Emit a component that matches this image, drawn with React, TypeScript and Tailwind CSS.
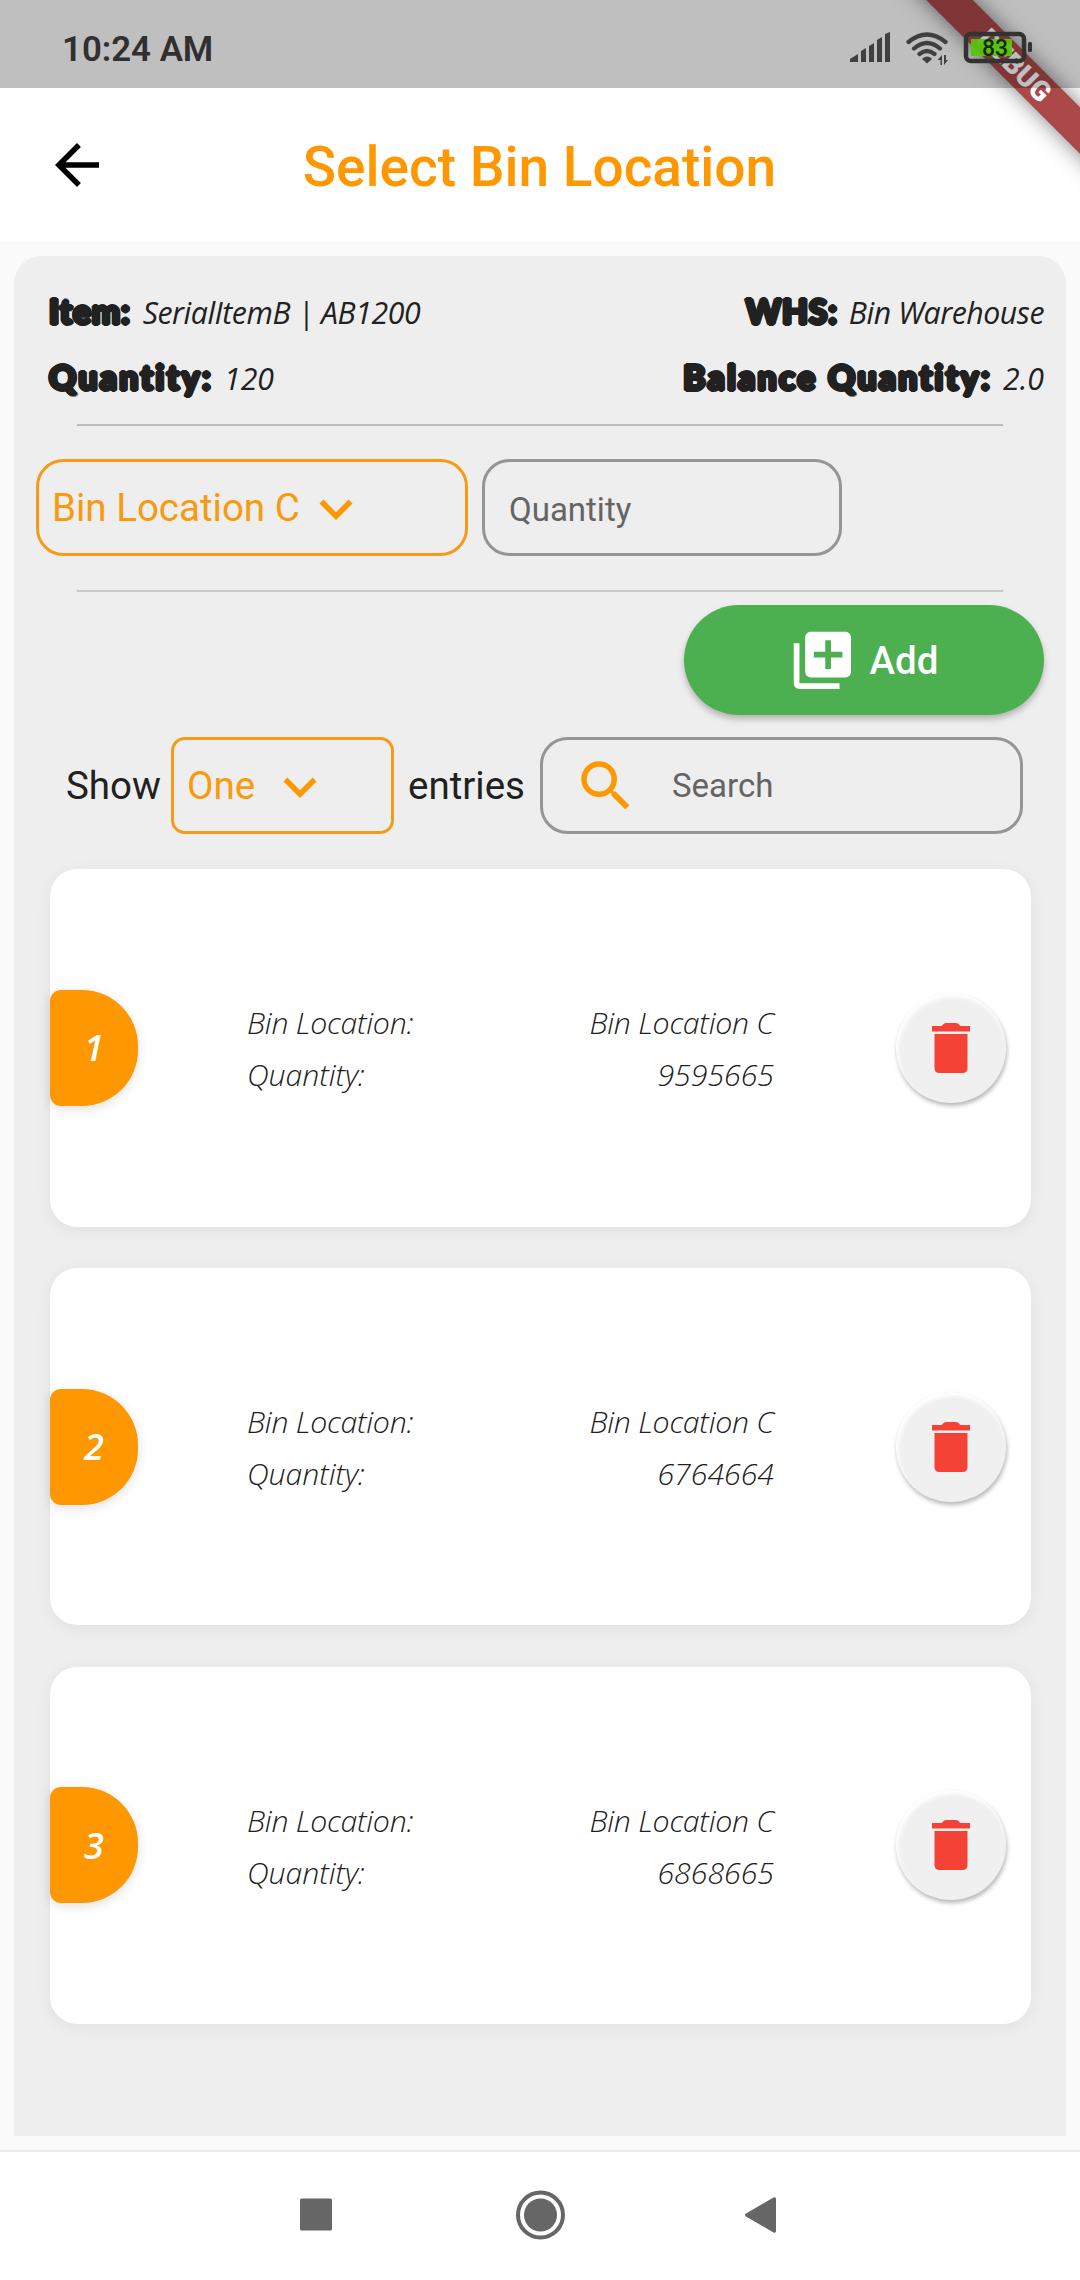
import { MdArrowBack, MdKeyboardArrowDown, MdLibraryAdd, MdSearch } from "react-icons/md";

const entries = [
  { id: 1, bin: "Bin Location C", quantity: "9595665" },
  { id: 2, bin: "Bin Location C", quantity: "6764664" },
  { id: 3, bin: "Bin Location C", quantity: "6868665" },
];

function DebugBanner() {
  return (
    <div className="pointer-events-none absolute top-0 right-0 h-[260px] w-[260px] overflow-hidden">
      <div className="absolute top-[49px] left-[-5px] flex h-[33px] w-[400px] rotate-45 items-center justify-center bg-[#ab4848] shadow-[0_0_22px_rgba(0,0,0,0.5)]">
        <span className="text-[28px] leading-none font-black whitespace-nowrap text-white">DEBUG</span>
      </div>
    </div>
  );
}

function StatusBar() {
  return (
    <div className="relative flex h-[88px] shrink-0 items-center justify-between bg-black/25 pr-[47px] pl-[62px] text-[#303030]">
      <span className="pt-[10px] text-[34.8px] leading-none font-semibold whitespace-nowrap">10:24 AM</span>
      <svg className="mt-[9px]" width="184" height="36" viewBox="849 31 184 36" fill="none">
        <g fill="#404040">
          <path d="M850 62v-3l8-5v8zM861 62V51l5-3v14zM869 62V46l5-3v19zM877 62V40l5-3v25zM885 62V34l5-2v30z" />
          <path d="M927 56.500a7 7 0 0 0-5 2.500l5 4.500 5-4.500c-1-1.500-3-2.500-5-2.500z" />
          <path d="M940.500 65v-5h-3l4.500-5v10zM944 55v10l4-5h-2v-5z" />
        </g>
        <g stroke="#404040" strokeWidth="4.200" strokeLinecap="round">
          <path d="M908.500 42q18.500-15 37 0M914 48.500q13-11 26 0M919.500 54q7.500-6 15 0" />
        </g>
        <rect x="971" y="39" width="41" height="17" fill="#58c40e" fillOpacity="0.950" />
        <rect x="966" y="34" width="58" height="27" rx="5" stroke="#333" strokeWidth="4.500" />
        <rect x="1028" y="42" width="4" height="10" rx="1.500" fill="#333" />
        <text x="995" y="55.500" textAnchor="middle" fontSize="23" fontWeight="500" fill="#14280a">83</text>
      </svg>
    </div>
  );
}

function InfoLabel({ children, wide = false }: { children: string; wide?: boolean }) {
  return (
    <span
      className={`font-[Lato,sans-serif] text-[33.5px] leading-[66px] font-black [text-shadow:2px_0_0_#212121,-2px_0_0_#212121,0_1.8px_0_#212121,0_-1.8px_0_#212121,1.4px_1.4px_0_#212121,-1.4px_1.4px_0_#212121,1.4px_-1.4px_0_#212121,-1.4px_-1.4px_0_#212121] ${
        wide ? "tracking-[2.4px]" : "tracking-[0.9px]"
      }`}
    >
      {children}
    </span>
  );
}

function InfoValue({ children, numeric = false }: { children: string; numeric?: boolean }) {
  return (
    <span
      className={`font-['Open_Sans',sans-serif] text-[30.25px] italic ${numeric ? "tracking-normal" : "tracking-[-0.45px]"}`}
    >
      {children}
    </span>
  );
}

function TrashIcon() {
  return (
    <svg width="40" height="52" viewBox="0 0 40 52" fill="#f44336">
      <path d="M1 4h9q1 0 2-1.500T15 1h10q2 0 3 1.500T30 4h9v5.500H1zM3.500 12h33v34q0 5-5 5h-23q-5 0-5-5z" />
    </svg>
  );
}

function EntryCard({ id, bin, quantity }: { id: number; bin: string; quantity: string }) {
  return (
    <div className="flex h-[357.5px] items-center rounded-[27.5px] bg-white pr-[25px] shadow-[0_3px_16px_rgba(0,0,0,0.06)]">
      <div className="flex h-[116px] w-[88px] items-center justify-center rounded-l-[11px] rounded-r-[56px] bg-[#ff9800] pt-[1px] font-['Open_Sans',sans-serif] text-[36px] leading-none font-semibold text-white italic shadow-[0_3px_12px_rgba(0,0,0,0.12)]">
        {id}
      </div>
      <div className="ml-[109px] flex w-[527px] flex-col pt-[3px] font-['Open_Sans',sans-serif] text-[30.25px] leading-[52px] font-light text-[#212121] italic">
        <div className="flex justify-between tracking-[-0.27px]">
          <span>Bin Location:</span>
          <span>{bin}</span>
        </div>
        <div className="flex justify-between">
          <span className="tracking-[-0.1px]">Quantity:</span>
          <span>{quantity}</span>
        </div>
      </div>
      <button className="ml-auto flex h-[110px] w-[110px] items-center justify-center rounded-full bg-[#f0f0f0] pr-[1px] shadow-[1px_3px_4px_rgba(0,0,0,0.28),inset_2px_4px_4px_#fff]">
        <TrashIcon />
      </button>
    </div>
  );
}

export default function App() {
  return (
    <div className="relative flex h-[2280px] w-[1080px] flex-col overflow-hidden bg-[#fafafa] font-[Roboto,sans-serif] text-[#212121]">
      <div className="absolute inset-x-0 top-0 h-[242px] bg-white" />
      <DebugBanner />
      <StatusBar />
      <header className="relative flex h-[154px] shrink-0 items-center justify-center">
        <MdArrowBack className="absolute left-[44px] text-[66px] text-black" />
        <h1 className="pt-[5px] pr-[1px] text-[55px] leading-none font-medium whitespace-nowrap text-[#ff9800]">
          Select Bin Location
        </h1>
      </header>

      <main className="mx-[14px] mt-[14px] flex h-[1880px] shrink-0 flex-col rounded-t-[27.5px] bg-[#eeeeee] whitespace-nowrap">
        <section className="flex h-[168px] flex-col pt-[22px] pr-[22px] pl-[35px]">
          <div className="flex h-[66px] items-baseline justify-between">
            <div className="flex items-baseline gap-[12px]">
              <InfoLabel>Item:</InfoLabel>
              <InfoValue>SerialItemB | AB1200</InfoValue>
            </div>
            <div className="flex items-baseline gap-[11px]">
              <InfoLabel>WHS:</InfoLabel>
              <InfoValue>Bin Warehouse</InfoValue>
            </div>
          </div>
          <div className="flex h-[66px] items-baseline justify-between">
            <div className="flex items-baseline gap-[11px]">
              <InfoLabel wide>Quantity:</InfoLabel>
              <InfoValue numeric>120</InfoValue>
            </div>
            <div className="flex items-baseline gap-[11px]">
              <InfoLabel wide>Balance Quantity:</InfoLabel>
              <InfoValue numeric>2.0</InfoValue>
            </div>
          </div>
        </section>
        <hr className="mx-[63px] border-t-2 border-[#bdbdbd]" />

        <section className="mt-[33px] flex h-[97px] gap-[14px] pl-[22px]">
          <div className="flex w-[432px] items-center rounded-[27.5px] border-[3px] border-[#f59b18] pl-[13px] text-[38.5px] text-[#f99a0e]">
            Bin Location C
            <MdKeyboardArrowDown className="mt-[3px] ml-[3px] text-[66px] text-[#ff9800]" />
          </div>
          <div className="flex w-[360px] items-center rounded-[27.5px] border-[3px] border-[#959595] pt-[4px] pl-[24px] text-[33px] text-[#646464]">
            Quantity
          </div>
        </section>
        <hr className="mx-[63px] mt-[34px] border-t-2 border-[#c8c8c8]" />

        <button className="mt-[13px] mr-[22px] ml-auto flex h-[110px] w-[360px] shrink-0 items-center justify-center gap-[13px] rounded-full bg-[#4caf50] pr-[2px] text-[38.5px] font-medium text-white shadow-[0_4px_6px_rgba(0,0,0,0.25)]">
          <MdLibraryAdd className="text-[68.75px]" />
          <span className="pt-[2px]">Add</span>
        </button>

        <section className="mt-[22px] flex h-[97px] shrink-0 items-center pl-[52px] text-[38.5px]">
          <span className="w-[105px] pt-px">Show</span>
          <div className="flex h-full w-[223px] items-center rounded-[13.75px] border-[3px] border-[#f59b18] pl-[13px] text-[#f99a0e]">
            <span className="w-[80px] pt-px">One</span>
            <MdKeyboardArrowDown className="mt-[3px] text-[66px] text-[#ff9800]" />
          </div>
          <span className="ml-[14px] w-[132px] pt-px">entries</span>
          <div className="flex h-full w-[483px] items-center rounded-[27.5px] border-[3px] border-[#959595] pl-[30px] text-[33px] text-[#646464]">
            <MdSearch className="text-[66px] text-[#ff9800]" />
            <span className="ml-[33px]">Search</span>
          </div>
        </section>

        <section className="mt-[35px] flex flex-col gap-[41.25px] pr-[35px] pl-[36px]">
          {entries.map((entry) => (
            <EntryCard key={entry.id} {...entry} />
          ))}
        </section>
      </main>

      <nav className="mt-auto flex h-[130px] shrink-0 items-center justify-center border-t-2 border-[#ececec] bg-white pb-[2px]">
        <svg width="480" height="50" viewBox="300 2190 480 50" fill="#666">
          <rect x="300" y="2198.500" width="32" height="32" rx="1.500" />
          <circle cx="540.500" cy="2215" r="22.500" fill="none" stroke="#666" strokeWidth="4" />
          <circle cx="540.500" cy="2215" r="16.500" />
          <path d="M746 2213.500 773.500 2197.500q2.500-1 2.500 1.500v32q0 2.500-2.500 1.500L746 2216.500q-2-1.500 0-3z" />
        </svg>
      </nav>
    </div>
  );
}
